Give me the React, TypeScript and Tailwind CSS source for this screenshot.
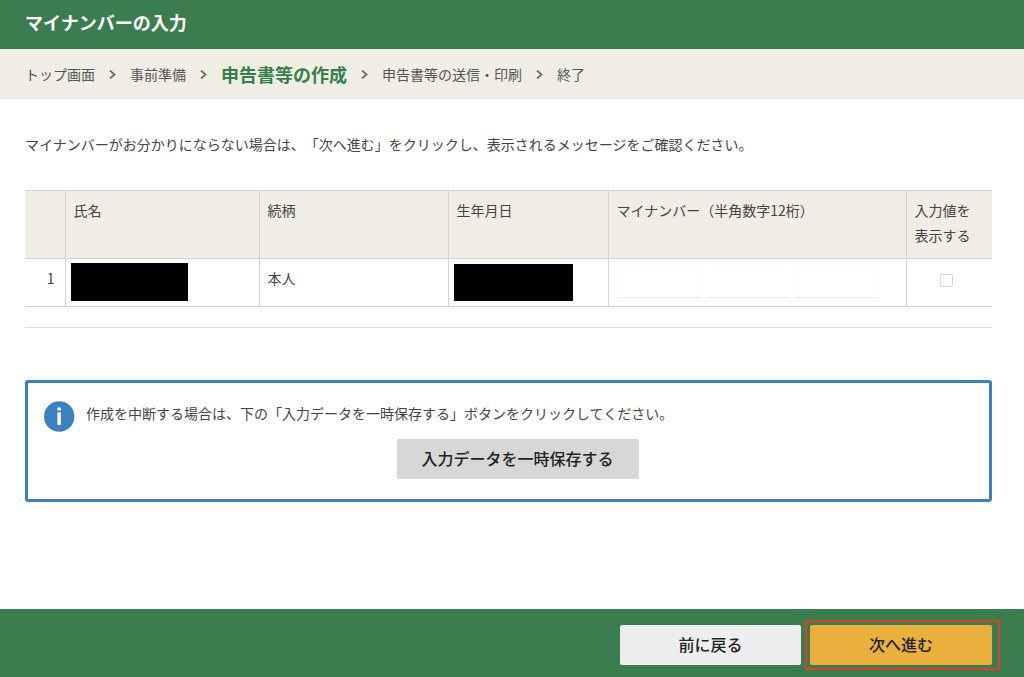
import { Fragment } from 'react';

const steps = [
  { label: 'トップ画面', current: false },
  { label: '事前準備', current: false },
  { label: '申告書等の作成', current: true },
  { label: '申告書等の送信・印刷', current: false },
  { label: '終了', current: false },
];

const numberParts = ['1〜4桁目', '5〜8桁目', '9〜12桁目'];

function Chevron() {
  return (
    <svg className="h-[9px] w-[7px] shrink-0" viewBox="0 0 7 9" fill="none" stroke="#666" strokeWidth="1.7" aria-hidden="true">
      <path d="M1 0.6 5.6 4.5 1 8.4" />
    </svg>
  );
}

function InfoIcon() {
  return (
    <svg className="h-[31px] w-[31px] shrink-0" viewBox="0 0 31 31" aria-hidden="true">
      <circle cx="15.2" cy="15.5" r="15.2" fill="#3d80bf" />
      <rect x="13.4" y="6.6" width="3.4" height="3" rx="0.6" fill="#fff" />
      <rect x="13.4" y="11.2" width="3.4" height="12.8" rx="0.6" fill="#fff" />
    </svg>
  );
}

function Breadcrumb() {
  return (
    <nav aria-label="手順" className="bg-[#efede4] px-[25px]">
      <ol className="flex h-[50px] items-center gap-[14px] text-sm text-[#555]">
        {steps.map((step, i) => (
          <Fragment key={step.label}>
            {i > 0 && (
              <li aria-hidden="true">
                <Chevron />
              </li>
            )}
            <li
              aria-current={step.current ? 'step' : undefined}
              className={step.current ? 'text-lg font-bold text-[#357f4b]' : ''}
            >
              {step.label}
            </li>
          </Fragment>
        ))}
      </ol>
    </nav>
  );
}

function PersonTable() {
  return (
    <table className="w-full table-fixed border-collapse border-y border-[#d3d3d1] text-sm leading-[25px] text-[#444]">
      <colgroup>
        <col className="w-[40px]" />
        <col className="w-[194px]" />
        <col className="w-[189px]" />
        <col className="w-[160px]" />
        <col />
        <col className="w-[86px]" />
      </colgroup>
      <thead>
        <tr className="h-[68px] bg-[#efede4] text-left align-top [&>th]:border-b [&>th]:border-[#d3d3d1] [&>th]:px-2 [&>th]:py-[7px] [&>th]:font-normal [&>th+th]:border-l">
          <th scope="col" aria-label="番号" />
          <th scope="col">氏名</th>
          <th scope="col">続柄</th>
          <th scope="col">生年月日</th>
          <th scope="col">マイナンバー（半角数字12桁）</th>
          <th scope="col" id="show-value">
            入力値を
            <br />
            表示する
          </th>
        </tr>
      </thead>
      <tbody>
        <tr className="h-[48px] align-top [&>td+td]:border-l [&>td]:border-[#d3d3d1]">
          <td className="py-[7px] pr-[10px] text-right">1</td>
          <td className="px-[5px] pt-1">
            <div className="h-[38px] w-[117px] bg-black" />
          </td>
          <td className="px-2 py-[7px]">本人</td>
          <td className="px-[5px] pt-[5px]">
            <div className="h-[37px] w-[119px] bg-black" />
          </td>
          <td className="px-2 pt-[5px]">
            <div className="flex gap-[5px]">
              {numberParts.map((part) => (
                <input
                  key={part}
                  type="password"
                  maxLength={4}
                  aria-label={`マイナンバー ${part}`}
                  className="h-[34px] w-[84px] border border-[#fdfdfd] border-b-[#e9e9e9] bg-white px-2"
                />
              ))}
            </div>
          </td>
          <td className="pr-[6px] pt-[15px]">
            <input
              type="checkbox"
              aria-labelledby="show-value"
              className="mx-auto block size-[13px] appearance-none rounded-[2px] border border-[#d5d5d5] bg-white"
            />
          </td>
        </tr>
      </tbody>
    </table>
  );
}

export default function App() {
  return (
    <div className="flex min-h-screen flex-col bg-white font-['Noto_Sans_CJK_JP',sans-serif] text-[#444] [text-spacing-trim:space-all]" lang="ja">
      <header className="flex h-[49px] items-center bg-[#3c7d4f] px-[25px] pb-[5px]">
        <h1 className="text-lg font-bold text-white">マイナンバーの入力</h1>
      </header>
      <Breadcrumb />

      <main className="grow pr-8 pl-[25px]">
        <p className="pt-[33px] text-sm leading-[25px]">
          マイナンバーがお分かりにならない場合は、「次へ進む」をクリックし、表示されるメッセージをご確認ください。
        </p>
        <div className="mt-[33px] border-b border-[#dcdcdc] pb-5">
          <PersonTable />
        </div>

        <section className="mt-[52px] mb-8 rounded-[3px] border-3 border-[#3d80bf] px-4 pt-[18px] pb-5">
          <div className="flex gap-[11px]">
            <InfoIcon />
            <p className="text-sm leading-[25px]">
              作成を中断する場合は、下の「入力データを一時保存する」ボタンをクリックしてください。
            </p>
          </div>
          <div className="mt-[7px] flex justify-center pl-[18px]">
            <button type="button" className="h-10 w-[242px] rounded-xs bg-[#d7d7d7] pb-[3px] text-base font-medium text-[#222]">
              入力データを一時保存する
            </button>
          </div>
        </section>
      </main>

      <footer className="flex h-[68px] items-start justify-end gap-1 bg-[#3c7d4f] pt-[11px] pr-6">
        <button type="button" className="mt-[5px] h-10 w-[181px] rounded-xs bg-[#eee] pb-[3px] text-base font-medium text-[#222]">
          前に戻る
        </button>
        <div className="border-2 border-[#dc4027] py-[3px] pr-[6px] pl-[3px]">
          <button type="button" className="block h-10 w-[182px] rounded-xs bg-[#e9b03e] pb-[3px] text-base font-medium text-[#222]">
            次へ進む
          </button>
        </div>
      </footer>
    </div>
  );
}
